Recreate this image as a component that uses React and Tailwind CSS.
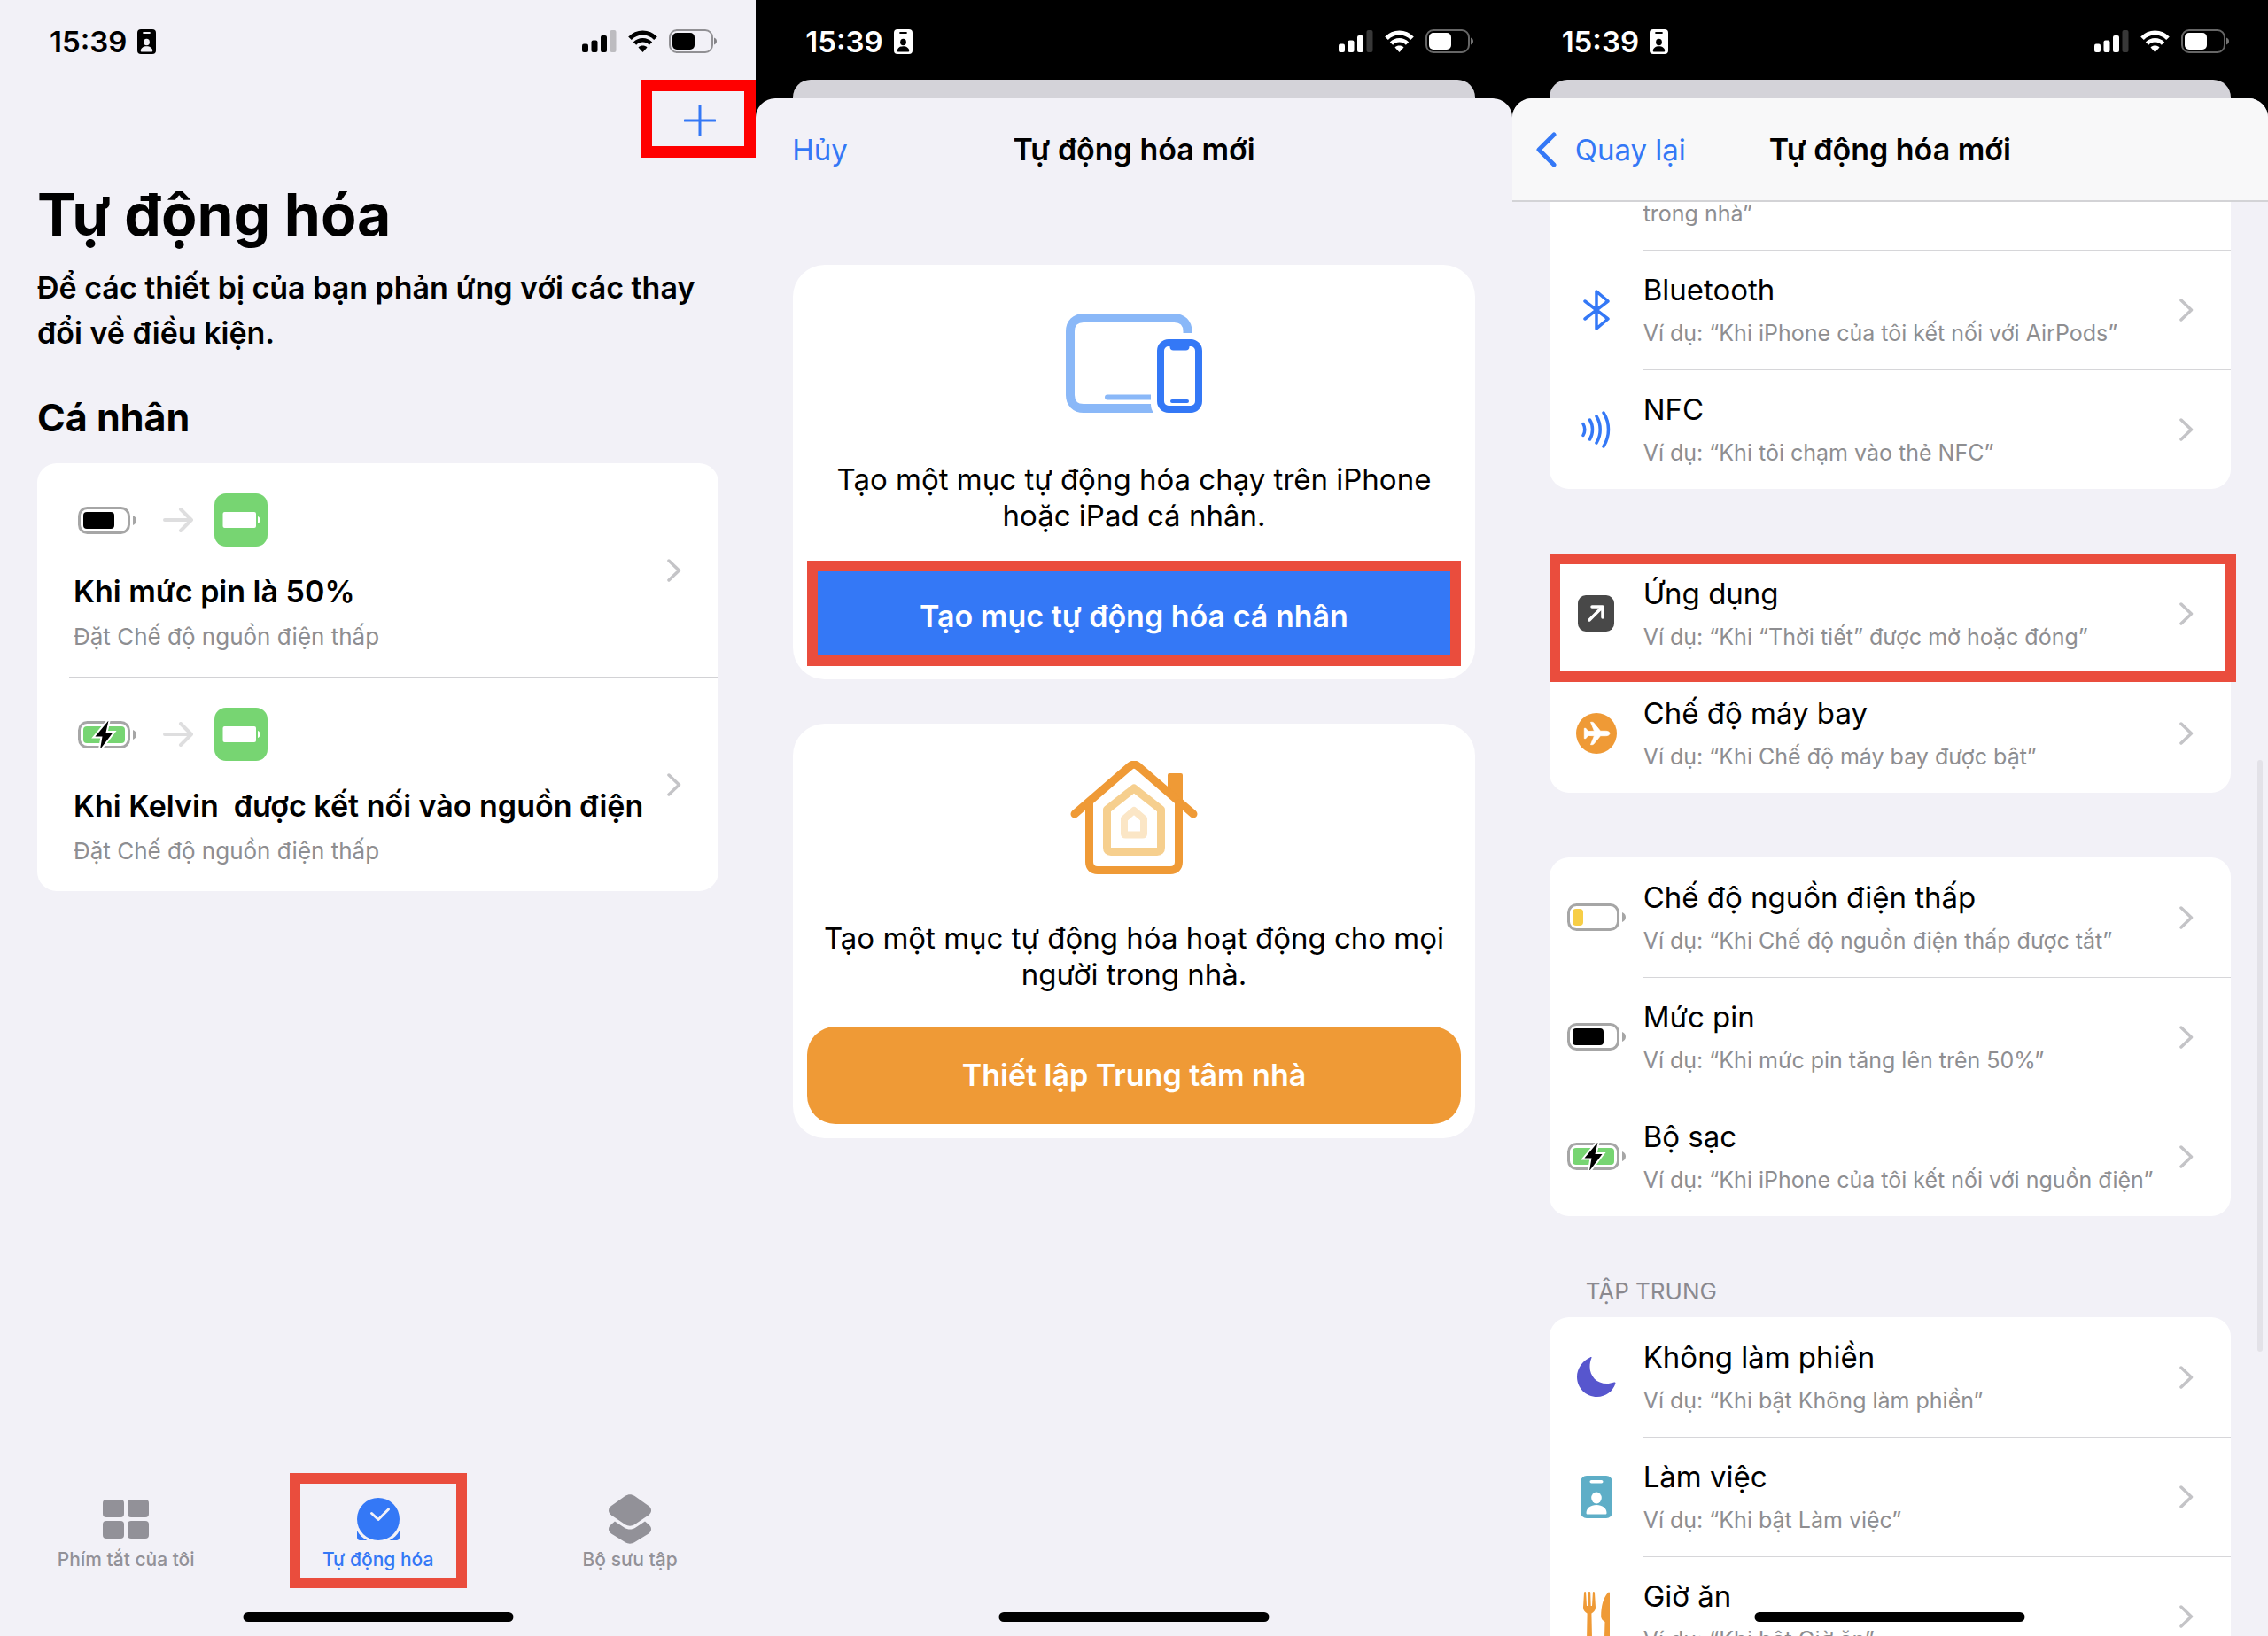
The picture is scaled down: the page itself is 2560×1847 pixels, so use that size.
import { useState } from 'react';

const TIME = '15:39';

function BadgeIcon({ className, hole }) {
  return (
    <svg viewBox="0 0 36 48" className={className} fill="currentColor" aria-hidden="true">
      <rect width="36" height="48" rx="7" />
      <rect x="10.500" y="5" width="15" height="3.600" rx="1.800" fill={hole} />
      <ellipse cx="18" cy="25" rx="5.800" ry="6.400" fill={hole} />
      <path d="M6.500 42c0-5.500 5-9 11.500-9s11.500 3.500 11.500 9c0 1-.6 1.500-1.500 1.500H8c-.9 0-1.500-.5-1.500-1.500z" fill={hole} />
    </svg>
  );
}

function StatusBar({ dark }) {
  return (
    <div className={`flex h-[90px] shrink-0 items-center justify-between pt-[3px] pr-[44px] pl-[56px] ${dark ? 'text-white' : 'text-black'}`}>
      <div className="flex items-center gap-3">
        <span className="text-[33px] leading-[40px] font-semibold">{TIME}</span>
        <BadgeIcon className="h-[28px] w-[21px]" hole={dark ? '#000' : '#f2f1f7'} />
      </div>
      <div className="flex items-center gap-3">
        <svg viewBox="0 0 40 25" className="h-[25px] w-[40px]" fill="currentColor" aria-hidden="true">
          <rect x="0" y="15.500" width="7" height="9.500" rx="2" />
          <rect x="10.500" y="11.500" width="7" height="13.500" rx="2" />
          <rect x="21" y="6" width="7" height="19" rx="2" />
          <rect x="31.500" y="0" width="7" height="25" rx="2" opacity=".22" />
        </svg>
        <svg viewBox="0 0 34 25" className="h-[25px] w-[34px]" fill="none" stroke="currentColor" strokeWidth="5" aria-hidden="true">
          <path d="M2 9.200C10 .8 23 .8 31 9.200" />
          <path d="M7.500 15.200c5-5.200 13-5.200 18 0" strokeWidth="4.600" />
          <path d="M16.500 25l-5-5.600c2.800-2.600 7.200-2.600 10 0z" fill="currentColor" stroke="none" />
        </svg>
        <svg viewBox="0 0 54 27" className="h-[27px] w-[54px]" aria-hidden="true">
          <rect x="1" y="1" width="48" height="25" rx="8" fill="none" stroke="currentColor" strokeWidth="2" opacity=".4" />
          <path d="M51 9.500c2 .8 3 2.200 3 4s-1 3.200-3 4z" fill="currentColor" opacity=".45" />
          <rect x="4" y="4" width="25" height="19" rx="5" fill="currentColor" />
        </svg>
      </div>
    </div>
  );
}

function HomeIndicator() {
  return <div className="absolute bottom-4 left-1/2 h-[11px] w-[305px] -translate-x-1/2 rounded-full bg-black" />;
}

function Chevron() {
  return (
    <svg viewBox="0 0 16 26" className="h-[26px] w-[16px] shrink-0" fill="none" stroke="#c4c4c7" strokeWidth="3.500" strokeLinecap="round" strokeLinejoin="round" aria-hidden="true">
      <path d="M2 2l11.500 11L2 24" />
    </svg>
  );
}

function Battery({ level, color, charging }) {
  return (
    <svg viewBox="0 0 66 31" className="h-[31px] w-[66px]" aria-hidden="true">
      <rect x="1.500" y="1.500" width="56" height="28" rx="9" fill="none" stroke="#a6a6a6" strokeWidth="3" />
      <path d="M62 10c2.600.9 4 3 4 5.500s-1.400 4.600-4 5.500z" fill="#a6a6a6" />
      <rect x="6" y="6" width={level} height="19" rx="4" fill={color} />
      {charging && (
        <path d="M34.500-.5L19.500 17.500h8L25 32 39.500 13h-8z" fill="#000" stroke="#fff" strokeWidth="4" paintOrder="stroke" />
      )}
    </svg>
  );
}

function ArrowIcon() {
  return (
    <svg viewBox="0 0 34 28" className="mr-[24px] ml-[30px] h-[28px] w-[34px]" fill="none" stroke="#dededf" strokeWidth="4" strokeLinecap="round" strokeLinejoin="round" aria-hidden="true">
      <path d="M2 14h29M20 2l12 12-12 12" />
    </svg>
  );
}

function LowPowerTile() {
  return (
    <svg viewBox="0 0 60 60" className="h-[60px] w-[60px]" aria-hidden="true">
      <rect width="60" height="60" rx="13" fill="#77d572" />
      <rect x="9.500" y="21" width="37.500" height="18" rx="2" fill="#fff" />
      <path d="M49 26c1.600.5 2.600 2 2.600 4s-1 3.500-2.600 4z" fill="#fff" />
    </svg>
  );
}

const automations = [
  { title: 'Khi mức pin là 50%', subtitle: 'Đặt Chế độ nguồn điện thấp', icon: <Battery level={35} color="#000" /> },
  {
    title: 'Khi Kelvin  được kết nối vào nguồn điện',
    subtitle: 'Đặt Chế độ nguồn điện thấp',
    icon: <Battery level={47} color="#77d572" charging />,
  },
];

const tabs = [
  {
    id: 'shortcuts',
    label: 'Phím tắt của tôi',
    icon: (
      <svg viewBox="0 0 52 56" className="h-[56px] w-[52px]" fill="currentColor" aria-hidden="true">
        <rect x="0" y="6" width="24" height="20" rx="4" />
        <rect x="28" y="6" width="24" height="20" rx="4" />
        <rect x="0" y="30" width="24" height="20" rx="4" />
        <rect x="28" y="30" width="24" height="20" rx="4" />
      </svg>
    ),
  },
  {
    id: 'automation',
    label: 'Tự động hóa',
    icon: (
      <svg viewBox="0 0 48 56" className="h-[56px] w-[48px]" fill="currentColor" aria-hidden="true">
        <circle cx="24" cy="28" r="24" />
        <path d="M0 41c2.600 5 6.500 8.600 11.500 11H3.500C1.300 52 0 50.700 0 48.500zM48 41c-2.600 5-6.500 8.600-11.500 11h8c2.200 0 3.500-1.300 3.500-3.500z" />
        <path d="M16.500 21.500L24 28.500 35.500 17" fill="none" stroke="#f2f1f7" strokeWidth="3" strokeLinecap="round" strokeLinejoin="round" />
      </svg>
    ),
  },
  {
    id: 'gallery',
    label: 'Bộ sưu tập',
    icon: (
      <svg viewBox="0 0 48 56" className="h-[56px] w-[48px]" fill="currentColor" aria-hidden="true">
        <path d="M7 30.500L3 34c-4 3-4 7.500 0 10.500l15.500 9.500c4 2.300 7 2.300 11 0L45 44.500c4-3 4-7.500 0-10.500l-4-3.500-10.500 7c-4.500 2.800-8.500 2.800-13 0z" />
        <path d="M18.500 2c4-2.300 7-2.300 11 0L45 13c4 3 4 7.500 0 10.500L29.500 34c-4 2.300-7 2.300-11 0L3 23.500c-4-3-4-7.500 0-10.500z" stroke="#f2f1f7" strokeWidth="4" paintOrder="stroke" />
      </svg>
    ),
  },
];

function AutomationScreen() {
  const [tab, setTab] = useState('automation');

  return (
    <section className="relative flex h-full flex-col overflow-hidden bg-[#f2f1f7]">
      <StatusBar />
      <div className="flex justify-end">
        <button aria-label="Thêm" className="flex h-[88px] w-[130px] items-center justify-center border-[13px] border-[#ff0000] pt-[3px] pl-[3px]">
          <svg viewBox="0 0 36 36" className="h-9 w-9" stroke="#3478f6" strokeWidth="3" strokeLinecap="round" aria-hidden="true">
            <path d="M18 1v34M1 18h34" />
          </svg>
        </button>
      </div>

      <div className="px-[42px]">
        <h1 className="mt-[22px] text-[66px] leading-[84px] font-bold">Tự động hóa</h1>
        <p className="mt-[15px] text-[34px] leading-[51px] font-semibold">
          Để các thiết bị của bạn phản ứng với các thay đổi về điều kiện.
        </p>
        <h2 className="mt-[42px] text-[43px] leading-[56px] font-bold">Cá nhân</h2>
        <ul className="mt-6 overflow-hidden rounded-[22px] bg-white">
          {automations.map((item, i) => (
            <li key={item.title} className="pl-9">
              <button className={`flex w-full items-center justify-between pr-[42px] text-left ${i > 0 ? 'border-t border-[#d2d2d5]' : ''}`}>
                <span className="flex flex-col pt-[34px] pb-[21px] pl-[5px]">
                  <span className="flex items-center pl-[5px]">
                    {item.icon}
                    <ArrowIcon />
                    <LowPowerTile />
                  </span>
                  <span className="mt-6 text-[34px] leading-[54px] font-semibold whitespace-pre">{item.title}</span>
                  <span className="text-[26px] leading-[48px] text-[#8e8e91]">{item.subtitle}</span>
                </span>
                <Chevron />
              </button>
            </li>
          ))}
        </ul>
      </div>

      <nav className="mt-auto mb-[54px] grid grid-cols-3">
        {tabs.map((t) => (
          <button
            key={t.id}
            onClick={() => setTab(t.id)}
            className={`mx-auto flex h-[130px] w-[200px] flex-col items-center border-[12px] pt-3 ${
              tab === t.id ? 'border-[#ea4d3d] text-[#3478f6]' : 'border-transparent text-[#929198]'
            }`}
          >
            {t.icon}
            <span className="text-[21px] leading-[36px] font-medium whitespace-nowrap">{t.label}</span>
          </button>
        ))}
      </nav>
      <HomeIndicator />
    </section>
  );
}

function SheetScreen({ children }) {
  return (
    <section className="relative flex h-full flex-col overflow-hidden bg-black">
      <StatusBar dark />
      <div className="mx-[42px] h-[21px] shrink-0 rounded-t-[20px] bg-[#d4d3d9]" />
      <div className="flex min-h-0 flex-1 flex-col overflow-hidden rounded-t-[22px] bg-[#f2f1f7]">{children}</div>
      <HomeIndicator />
    </section>
  );
}

function DevicesIcon() {
  return (
    <svg viewBox="0 -2 154 114" className="h-[114px] w-[154px]" fill="none" aria-hidden="true">
      <path d="M137.500 22v-2c0-9-6-15-15-15H20C11 5 5 11 5 20v72c0 9 6 15 15 15h80" stroke="#8ab8f8" strokeWidth="10" />
      <path d="M47 94.500h49" stroke="#8ab8f8" strokeWidth="6" strokeLinecap="round" />
      <path d="M96 22h58v90H99c-2-3-3-6-3-10z" fill="#fff" />
      <rect x="107" y="33" width="43" height="75" rx="9" stroke="#3478f6" strokeWidth="8" />
      <path d="M114 34h29c-2.500 0-3.500 1.500-3.500 3.500 0 2.500-1.500 4-4 4h-14c-2.500 0-4-1.500-4-4 0-2-1-3.500-3.500-3.500z" fill="#3478f6" />
      <path d="M120 99h17" stroke="#3478f6" strokeWidth="4" strokeLinecap="round" />
    </svg>
  );
}

function HouseIcon() {
  return (
    <svg viewBox="0 0 144 136" className="h-[136px] w-[144px]" fill="none" strokeLinejoin="round" strokeLinecap="round" aria-hidden="true">
      <path d="M112 15h13a1 1 0 0 1 1 1v36l-15-13V16a1 1 0 0 1 1-1z" fill="#ef9a36" stroke="#ef9a36" strokeWidth="2" />
      <path d="M5 60L67.500 6c3-2.500 6-2.500 9 0L139 60" stroke="#ef9a36" strokeWidth="9" />
      <path d="M21.500 48v66c0 6 3.500 9.500 9.500 9.500h82c6 0 9.500-3.500 9.500-9.500V48" stroke="#ef9a36" strokeWidth="9" />
      <path d="M72 31l30.500 24v43c0 3-1.500 4.500-4.500 4.500H46c-3 0-4.500-1.500-4.500-4.500V55z" stroke="#f6cf8e" strokeWidth="9" />
      <path d="M72 56l11 9.500V82c0 1-.5 1.500-1.500 1.500h-19c-1 0-1.500-.5-1.500-1.500V65.500z" stroke="#fbe6c6" strokeWidth="8" />
    </svg>
  );
}

function ChoiceCard({ icon, text, action, color, marked }) {
  return (
    <div className="flex flex-col items-center rounded-[36px] bg-white px-4 pt-[40px] pb-4">
      <div className="flex h-[140px] items-center">{icon}</div>
      <p className="mt-[42px] mb-[38px] px-1 text-center text-[33px] leading-[41px]">{text}</p>
      <button className={`relative w-full py-[31px] text-[34px] leading-[48px] font-semibold text-white ${color} ${marked ? '' : 'rounded-[32px]'}`}>
        {action}
        {marked && <span className="absolute inset-x-0 -top-2 -bottom-px border-[12px] border-[#ea4d3d]" />}
      </button>
    </div>
  );
}

function NewAutomationScreen() {
  return (
    <SheetScreen>
      <header className="grid grid-cols-[1fr_auto_1fr] items-center px-[41px] pt-[33px] text-[34px] leading-[50px]">
        <button className="justify-self-start text-[33px] text-[#3478f6]">Hủy</button>
        <h2 className="font-semibold">Tự động hóa mới</h2>
      </header>
      <div className="mt-[105px] flex flex-col gap-[50px] px-[42px]">
        <ChoiceCard
          icon={<DevicesIcon />}
          text="Tạo một mục tự động hóa chạy trên iPhone hoặc iPad cá nhân."
          action="Tạo mục tự động hóa cá nhân"
          color="bg-[#3478f6]"
          marked
        />
        <ChoiceCard
          icon={<HouseIcon />}
          text="Tạo một mục tự động hóa hoạt động cho mọi người trong nhà."
          action="Thiết lập Trung tâm nhà"
          color="bg-[#ef9a36]"
        />
      </div>
    </SheetScreen>
  );
}

function BluetoothIcon() {
  return (
    <svg viewBox="0 0 30 46" className="h-[46px] w-[30px]" fill="none" stroke="#3478f6" strokeWidth="3.500" strokeLinecap="round" strokeLinejoin="round" aria-hidden="true">
      <path d="M2 13l26 20-13 11V2l13 11L2 33" />
    </svg>
  );
}

function NfcIcon() {
  return (
    <svg viewBox="0 0 34 42" className="h-[42px] w-[34px]" fill="none" stroke="#3478f6" strokeWidth="3.500" strokeLinecap="round" aria-hidden="true">
      <path d="M2 14.500c2.200 4 2.200 9 0 13M9.500 10c4 6.500 4 15.500 0 22M17 6c5.600 9 5.600 21 0 30M25 2c7.300 11.500 7.300 26.500 0 38" />
    </svg>
  );
}

function OpenAppIcon() {
  return (
    <svg viewBox="0 0 41 41" className="h-[41px] w-[41px]" aria-hidden="true">
      <rect width="41" height="41" rx="9" fill="#484848" />
      <path d="M13 28L28 13M16 13h12v12" fill="none" stroke="#fff" strokeWidth="3.500" strokeLinecap="round" strokeLinejoin="round" />
    </svg>
  );
}

function AirplaneIcon() {
  return (
    <svg viewBox="0 0 46 46" className="h-[46px] w-[46px]" aria-hidden="true">
      <circle cx="23" cy="23" r="23" fill="#ef9a36" />
      <path d="M38 23c0-1.600-2-2.700-4.500-2.700h-6L19.800 11c-.4-.5-.8-.7-1.500-.7H16.500l4 10-7 .3-2.600-3.300H9.300V28.700h1.600l2.600-3.300 7 .3-4 10h1.800c.7 0 1.100-.2 1.500-.7l7.700-9.300h6c2.500 0 4.500-1.100 4.500-2.700z" fill="#fff" stroke="#fff" strokeWidth=".8" strokeLinejoin="round" />
    </svg>
  );
}

function MoonIcon() {
  return (
    <svg viewBox="0 0 44 45" className="h-[45px] w-[44px]" aria-hidden="true">
      <path d="M16.500.8c-1.500 4-2 7-2 10.200 0 11 8 19 19 19 3 0 6-.6 8.500-1.500 1-.3 1.800.5 1.400 1.600C40.500 39 32.500 45 22.800 45 10 45 0 35 0 22.500 0 13 6 4.500 14.800.4c1-.5 2.100-.4 1.700.4z" fill="#5756ce" />
    </svg>
  );
}

function MealIcon() {
  return (
    <svg viewBox="0 0 34 56" className="h-[56px] w-[34px]" fill="#ef9a36" aria-hidden="true">
      <path d="M3 1.200c.2-1.500 2-1.500 2.100 0L6 16h1.300L7.800 1c.1-1.300 2.300-1.300 2.400 0l.5 15H12l.9-14.800c.1-1.500 1.900-1.500 2.100 0l1 16.300c.1 3.500-2 5.500-4.600 7L12 52c.1 4-6 4-5.900 0l.5-27.500C4 23 1.900 21 2 17.500z" />
      <path d="M32 2v50c0 4-6 4-6 0l.5-18c-2.500-1.500-4.300-3-4.300-6.500C22.200 17 24.500 7 30 1c1-1 2-.5 2 1z" />
    </svg>
  );
}

const groups = [
  {
    rows: [
      { title: 'Bluetooth', example: 'Ví dụ: “Khi iPhone của tôi kết nối với AirPods”', icon: <BluetoothIcon /> },
      { title: 'NFC', example: 'Ví dụ: “Khi tôi chạm vào thẻ NFC”', icon: <NfcIcon /> },
    ],
  },
  {
    rows: [
      { title: 'Ứng dụng', example: 'Ví dụ: “Khi “Thời tiết” được mở hoặc đóng”', icon: <OpenAppIcon />, marked: true },
      { title: 'Chế độ máy bay', example: 'Ví dụ: “Khi Chế độ máy bay được bật”', icon: <AirplaneIcon /> },
    ],
  },
  {
    rows: [
      { title: 'Chế độ nguồn điện thấp', example: 'Ví dụ: “Khi Chế độ nguồn điện thấp được tắt”', icon: <Battery level={12} color="#f7ce46" /> },
      { title: 'Mức pin', example: 'Ví dụ: “Khi mức pin tăng lên trên 50%”', icon: <Battery level={35} color="#000" /> },
      { title: 'Bộ sạc', example: 'Ví dụ: “Khi iPhone của tôi kết nối với nguồn điện”', icon: <Battery level={47} color="#77d572" charging /> },
    ],
  },
  {
    heading: 'TẬP TRUNG',
    rows: [
      { title: 'Không làm phiền', example: 'Ví dụ: “Khi bật Không làm phiền”', icon: <MoonIcon /> },
      { title: 'Làm việc', example: 'Ví dụ: “Khi bật Làm việc”', icon: <BadgeIcon className="h-[48px] w-[36px] text-[#5eaec7]" hole="#fff" /> },
      { title: 'Giờ ăn', example: 'Ví dụ: “Khi bật Giờ ăn”', icon: <MealIcon /> },
    ],
  },
];

function TriggerRow({ row, divider }) {
  return (
    <li className="relative">
      <button className="flex w-full text-left">
        <span className="flex w-[106px] shrink-0 items-center justify-center">{row.icon}</span>
        <span className={`flex flex-1 items-center justify-between border-t pr-[42px] ${divider ? 'border-[#d6d6d9]' : 'border-transparent'}`}>
          <span className="flex flex-col pt-[19px] pb-[17px]">
            <span className="text-[33px] leading-[50px]">{row.title}</span>
            <span className="text-[25px] leading-[48px] whitespace-nowrap text-[#8e8e91]">{row.example}</span>
          </span>
          <Chevron />
        </span>
      </button>
      {row.marked && <span className="pointer-events-none absolute top-0 -right-[6px] -bottom-[10px] left-0 z-10 border-[12px] border-[#ea4d3d]" />}
    </li>
  );
}

function TriggerListScreen() {
  return (
    <SheetScreen>
      <header className="grid shrink-0 grid-cols-[1fr_auto_1fr] items-center border-b-2 border-[#d3d3d6] bg-[#f8f8f9] px-[26px] pt-[33px] pb-[32px] text-[34px] leading-[50px]">
        <button className="flex items-center gap-[21px] justify-self-start text-[33px] text-[#3478f6]">
          <svg viewBox="0 0 24 40" className="h-[40px] w-[24px]" fill="none" stroke="currentColor" strokeWidth="5" strokeLinecap="round" strokeLinejoin="round" aria-hidden="true">
            <path d="M21 3L4 20l17 17" />
          </svg>
          Quay lại
        </button>
        <h2 className="font-semibold">Tự động hóa mới</h2>
      </header>
      <div className="relative min-h-0 flex-1 overflow-hidden px-[42px]">
        <p className="bg-white pb-[28px] pl-[106px] text-[25px] leading-[26px] text-[#8e8e91]">trong nhà”</p>
        {groups.map((group, g) => (
          <div key={g} className={g > 0 ? (group.heading ? 'mt-[63px]' : 'mt-[73px]') : ''}>
            {group.heading && (
              <h3 className="mb-[7px] pl-[41px] text-[26px] leading-[44px] text-[#8a898f]">{group.heading}</h3>
            )}
            <ul className={`bg-white ${g > 0 ? 'rounded-[22px]' : 'rounded-b-[22px]'}`}>
              {group.rows.map((row, i) => (
                <TriggerRow key={row.title} row={row} divider={g === 0 || i > 0} />
              ))}
            </ul>
          </div>
        ))}
        <div className="absolute top-[630px] right-[6px] h-[668px] w-[6px] rounded-full bg-[#e3e2e8]" />
      </div>
    </SheetScreen>
  );
}

export default function App() {
  return (
    <main className="grid h-screen grid-cols-3 overflow-hidden font-['Inter','Noto_Sans',sans-serif] text-black">
      <AutomationScreen />
      <NewAutomationScreen />
      <TriggerListScreen />
    </main>
  );
}
